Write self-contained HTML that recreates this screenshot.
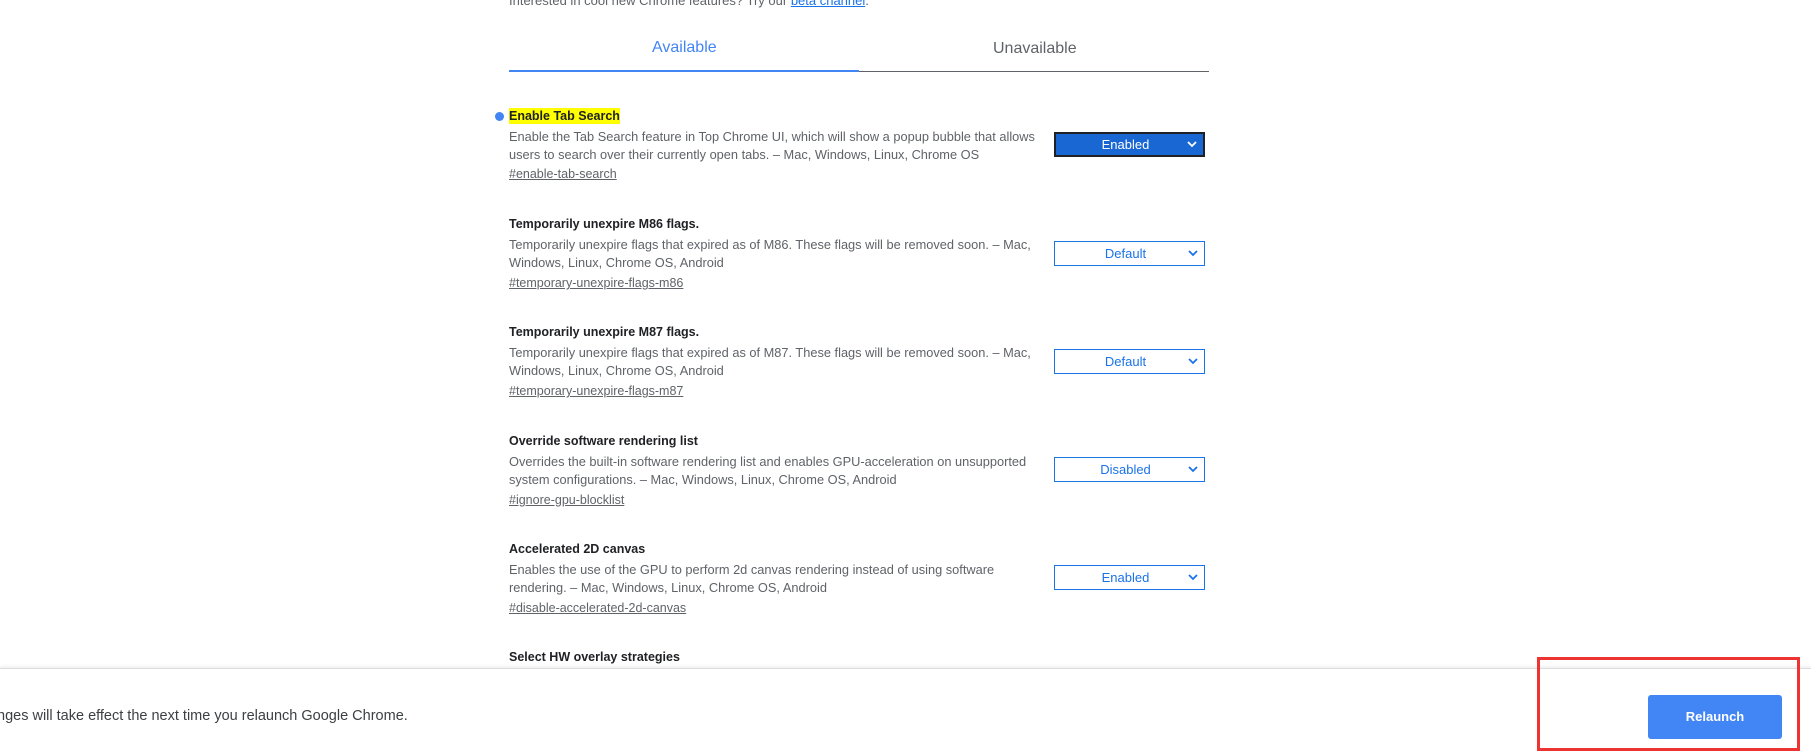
<!DOCTYPE html>
<html><head><meta charset="utf-8"><style>
*{margin:0;padding:0;box-sizing:border-box}
body{width:1811px;height:751px;overflow:hidden;background:#fff;font-family:"Liberation Sans",sans-serif;position:relative;color:#202124}
.a{position:absolute;white-space:nowrap}
.t{font-size:12.5px;font-weight:bold;color:#202124}
.d{font-size:12.8px;color:#5f6368;line-height:17.5px}
.l{font-size:12.5px;color:#5f6368;text-decoration:underline}
.s{position:absolute;left:1054px;width:151px;height:25px;border:1px solid #1a73e8;color:#1a73e8;font-size:13px;text-align:center;line-height:23px;padding-right:8px}
.s svg{position:absolute;right:6px;top:8px}
</style></head><body>
<div class="a" style="left:509px;top:-7px;font-size:13px;color:#5f6368">Interested in cool new Chrome features? Try our <span style="color:#1a73e8;text-decoration:underline">beta channel</span>.</div>
<div class="a" style="left:652px;top:39px;font-size:16px;color:#4285f4">Available</div>
<div class="a" style="left:993px;top:40px;font-size:16px;color:#5f6368">Unavailable</div>
<div class="a" style="left:509px;top:71px;width:700px;height:1px;background:#5f6368"></div>
<div class="a" style="left:509px;top:70px;width:350px;height:2px;background:#4285f4"></div>

<div class="a" style="left:495px;top:112px;width:9px;height:9px;border-radius:50%;background:#4285f4"></div>
<div class="a t" style="left:509px;top:108px;background:#ffff00;padding:1px 0">Enable Tab Search</div>
<div class="a d" style="left:509px;top:128px">Enable the Tab Search feature in Top Chrome UI, which will show a popup bubble that allows<br>users to search over their currently open tabs. – Mac, Windows, Linux, Chrome OS</div>
<div class="a l" style="left:509px;top:167px">#enable-tab-search</div>
<div class="s" style="top:132px;background:#1967d2;border:2px solid #202124;color:#fff;line-height:21px">Enabled<svg width="10" height="7" viewBox="0 0 10 7" style="top:7px"><path d="M1 1l4 4 4-4" stroke="#fff" stroke-width="1.8" fill="none"/></svg></div>

<div class="a t" style="left:509px;top:217px">Temporarily unexpire M86 flags.</div>
<div class="a d" style="left:509px;top:236px">Temporarily unexpire flags that expired as of M86. These flags will be removed soon. – Mac,<br>Windows, Linux, Chrome OS, Android</div>
<div class="a l" style="left:509px;top:276px">#temporary-unexpire-flags-m86</div>
<div class="s" style="top:241px">Default<svg width="10" height="7" viewBox="0 0 10 7"><path d="M1 1l4 4 4-4" stroke="#1a73e8" stroke-width="1.8" fill="none"/></svg></div>

<div class="a t" style="left:509px;top:325px">Temporarily unexpire M87 flags.</div>
<div class="a d" style="left:509px;top:344px">Temporarily unexpire flags that expired as of M87. These flags will be removed soon. – Mac,<br>Windows, Linux, Chrome OS, Android</div>
<div class="a l" style="left:509px;top:384px">#temporary-unexpire-flags-m87</div>
<div class="s" style="top:349px">Default<svg width="10" height="7" viewBox="0 0 10 7"><path d="M1 1l4 4 4-4" stroke="#1a73e8" stroke-width="1.8" fill="none"/></svg></div>

<div class="a t" style="left:509px;top:434px">Override software rendering list</div>
<div class="a d" style="left:509px;top:453px">Overrides the built-in software rendering list and enables GPU-acceleration on unsupported<br>system configurations. – Mac, Windows, Linux, Chrome OS, Android</div>
<div class="a l" style="left:509px;top:493px">#ignore-gpu-blocklist</div>
<div class="s" style="top:457px">Disabled<svg width="10" height="7" viewBox="0 0 10 7"><path d="M1 1l4 4 4-4" stroke="#1a73e8" stroke-width="1.8" fill="none"/></svg></div>

<div class="a t" style="left:509px;top:542px">Accelerated 2D canvas</div>
<div class="a d" style="left:509px;top:561px">Enables the use of the GPU to perform 2d canvas rendering instead of using software<br>rendering. – Mac, Windows, Linux, Chrome OS, Android</div>
<div class="a l" style="left:509px;top:601px">#disable-accelerated-2d-canvas</div>
<div class="s" style="top:565px">Enabled<svg width="10" height="7" viewBox="0 0 10 7"><path d="M1 1l4 4 4-4" stroke="#1a73e8" stroke-width="1.8" fill="none"/></svg></div>

<div class="a t" style="left:509px;top:650px">Select HW overlay strategies</div>

<div class="a" style="left:0;top:668px;width:1811px;height:83px;background:#fff;border-top:1px solid #dadce0;box-shadow:0 -2px 3px rgba(0,0,0,.06)"></div>
<div class="a" style="left:-3px;top:708px;font-size:14.5px;color:#3c4043">nges will take effect the next time you relaunch Google Chrome.</div>
<div class="a" style="left:1648px;top:695px;width:134px;height:44px;background:#4285f4;border-radius:3px;color:#fff;font-size:13px;font-weight:bold;text-align:center;line-height:44px">Relaunch</div>
<div class="a" style="left:1537px;top:657px;width:263px;height:94px;border:3px solid #ee3333"></div>
</body></html>
